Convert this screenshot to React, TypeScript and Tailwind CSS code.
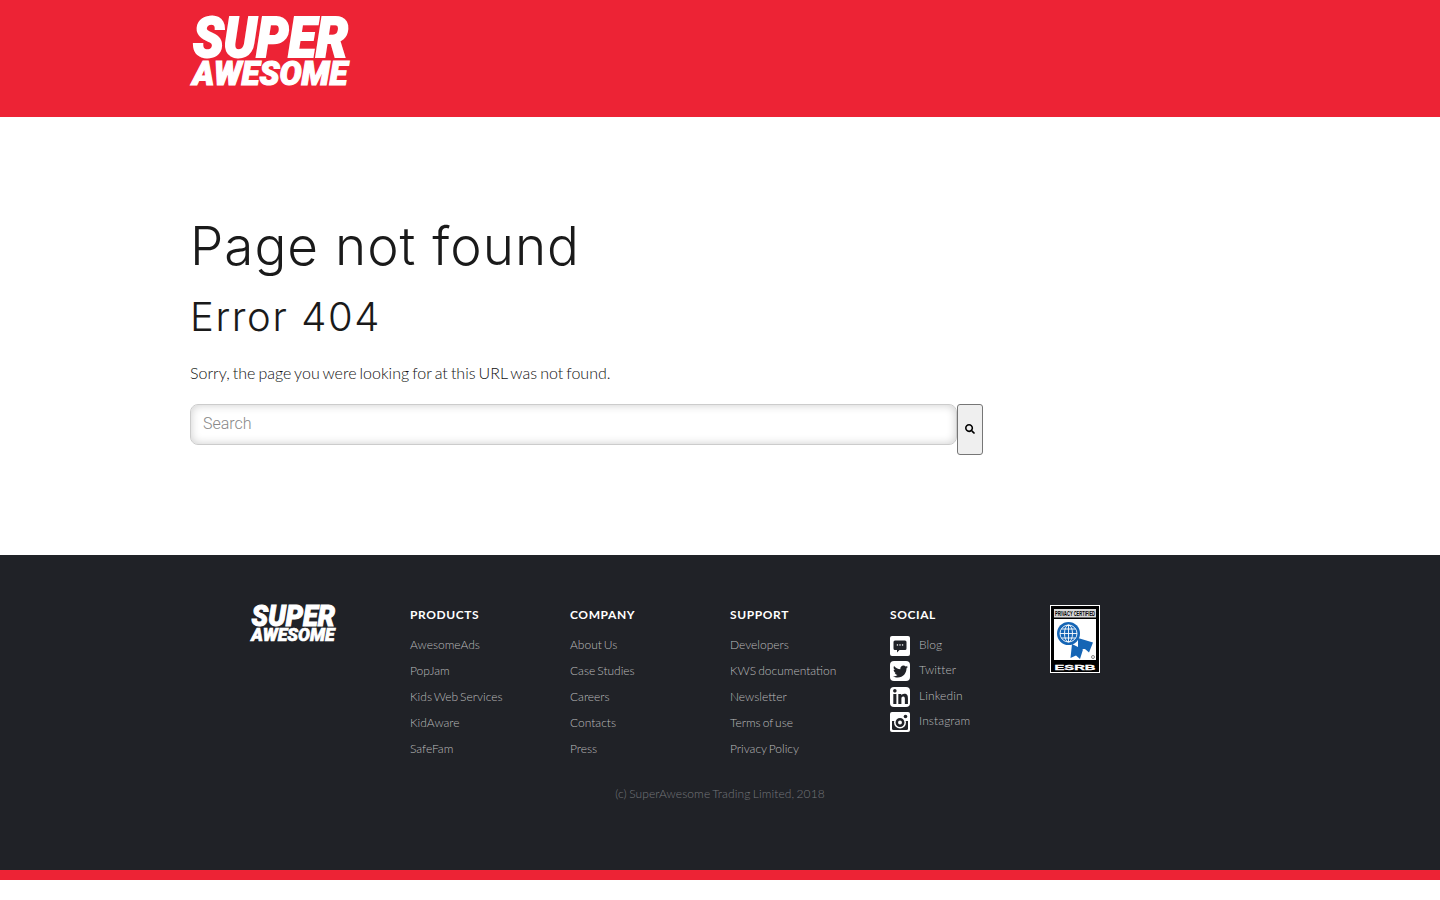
import React from 'react';
import { FaSearch, FaTwitter, FaLinkedinIn } from 'react-icons/fa';

const footerColumns = [
  { title: 'PRODUCTS', links: ['AwesomeAds', 'PopJam', 'Kids Web Services', 'KidAware', 'SafeFam'] },
  { title: 'COMPANY', links: ['About Us', 'Case Studies', 'Careers', 'Contacts', 'Press'] },
  { title: 'SUPPORT', links: ['Developers', 'KWS documentation', 'Newsletter', 'Terms of use', 'Privacy Policy'] },
];

const BlogIcon = () => (
  <svg viewBox="0 0 20 20" className="w-5 h-5">
    <rect width="20" height="20" rx="2" fill="#fff" />
    <path d="M5 4.500h10a1.500 1.500 0 0 1 1.500 1.500v6.500a1.500 1.500 0 0 1-1.500 1.500H9.500L7 16.500V14H5a1.500 1.500 0 0 1-1.500-1.500V6A1.500 1.500 0 0 1 5 4.500z" fill="#202227" />
    <rect x="6.800" y="8.300" width="1.300" height="1.300" fill="#fff" />
    <rect x="9.350" y="8.300" width="1.300" height="1.300" fill="#fff" />
    <rect x="11.900" y="8.300" width="1.300" height="1.300" fill="#fff" />
  </svg>
);

const InstagramIcon = () => (
  <svg viewBox="0 0 20 20" className="w-5 h-5">
    <rect width="20" height="20" rx="2" fill="#fff" />
    <path d="M2 9h16v7.500a1.500 1.500 0 0 1-1.500 1.500h-13A1.500 1.500 0 0 1 2 16.500z" fill="#202227" />
    <circle cx="10" cy="10.500" r="6" fill="#fff" />
    <circle cx="10" cy="10.500" r="3.200" fill="none" stroke="#202227" strokeWidth="2.500" />
    <circle cx="15.500" cy="4.500" r="1.800" fill="#202227" />
  </svg>
);

const SquareIcon = ({ children }: { children: React.ReactNode }) => (
  <span className="w-5 h-5 bg-white rounded-sm flex items-center justify-center text-[#202227]">{children}</span>
);

const socials = [
  { name: 'Blog', icon: <BlogIcon />, gap: 'mb-[5px]' },
  { name: 'Twitter', icon: <SquareIcon><FaTwitter size={15} /></SquareIcon>, gap: 'mb-[6px]' },
  { name: 'Linkedin', icon: <SquareIcon><FaLinkedinIn size={17} /></SquareIcon>, gap: 'mb-[5px]' },
  { name: 'Instagram', icon: <InstagramIcon />, gap: '' },
];

const Logo = ({ className }: { className: string }) => (
  <svg viewBox="0 0 160 70" className={`overflow-visible ${className}`} fill="#fff" stroke="#fff" fontFamily="Roboto, sans-serif" fontWeight={900} fontStyle="italic">
    <text x="3" y="39.500" fontSize="55" strokeWidth="2" textLength="155" lengthAdjust="spacingAndGlyphs">SUPER</text>
    <text x="2.500" y="67.500" fontSize="33" strokeWidth="1.200" textLength="155" lengthAdjust="spacingAndGlyphs">AWESOME</text>
  </svg>
);

const EsrbBadge = () => (
  <svg viewBox="0 0 50 68" className="w-[50px] h-[68px]" fontFamily="'Liberation Sans', sans-serif">
    <rect width="50" height="68" fill="#fff" />
    <rect x="1" y="1" width="48" height="66" fill="#000" />
    <rect x="4" y="4" width="42" height="8.500" fill="#d8d8d8" />
    <text x="5" y="11" fontSize="7" fontWeight={700} fill="#000" textLength="40" lengthAdjust="spacingAndGlyphs">PRIVACY CERTIFIED</text>
    <rect x="4" y="14" width="42" height="41" fill="#fff" />
    <path d="M28 33L43 37.500L39 47.500L35 44L28 44z" fill="#1565b5" />
    <path d="M22 39L33 44.500L30 54L26 50.500L20.500 53z" fill="#1565b5" />
    <circle cx="18.500" cy="28.500" r="11.500" fill="#1565b5" />
    <circle cx="18.500" cy="28.500" r="8.500" fill="none" stroke="#fff" strokeWidth="0.900" />
    <ellipse cx="18.500" cy="28.500" rx="4" ry="8.500" fill="none" stroke="#fff" strokeWidth="0.900" />
    <path d="M10 28.500h17M11.500 24h14M11.500 33h14M18.500 20v17" stroke="#fff" strokeWidth="0.900" />
    <circle cx="43" cy="52" r="1.500" fill="none" stroke="#555" strokeWidth="0.700" />
    <text x="4.500" y="64.500" fontSize="8" fontWeight={700} fill="#fff" stroke="#fff" strokeWidth="0.300" textLength="41" lengthAdjust="spacingAndGlyphs">ESRB</text>
  </svg>
);

export default function App() {
  return (
    <div className="bg-white min-h-[900px] font-['Lato',sans-serif] font-light">
      {/* header */}
      <header className="h-[117px] bg-[#ed2335] pl-[190px] pt-[17px]">
        <Logo className="w-[160px] h-[70px]" />
      </header>

      {/* main */}
      <main className="h-[438px] pl-[190px] pt-[97px] text-[#1a1a1a]">
        <h1 className="text-[53px] leading-[64px] font-light font-['Inter',sans-serif] tracking-[1px]">Page not found</h1>
        <h2 className="text-[40px] leading-[48px] font-light font-['Inter',sans-serif] mt-[15px] tracking-[1.6px]">Error 404</h2>
        <p className="text-[16px] leading-[24px] mt-[20px] text-[#111] [word-spacing:-1.25px]">Sorry, the page you were looking for at this URL was not found.</p>
        <form className="flex items-start mt-[19px]">
          <input
            placeholder="Search"
            className="w-[767px] h-[41px] border border-[#ccc] rounded-lg px-3 pb-[2px] text-[16px] font-['Roboto',sans-serif] font-light shadow-[inset_0_0_10px_rgba(0,0,0,0.2)] placeholder:text-[#888] outline-none"
          />
          <button type="button" className="w-[26px] h-[51px] bg-[#efefef] border border-[#767676] rounded-[3px] flex items-center justify-center text-black pb-[2px]">
            <FaSearch size={10} />
          </button>
        </form>
      </main>

      {/* footer */}
      <footer className="h-[315px] bg-[#202227]">
        <div className="flex pl-[250px] pt-[50px]">
          <div className="w-[160px]">
            <Logo className="w-[86px] h-[38px]" />
          </div>
          {footerColumns.map((col) => (
            <div key={col.title} className="w-[160px]">
              <h5 className="text-[12px] leading-[20px] font-bold tracking-[0.6px] text-white">{col.title}</h5>
              <ul className="mt-[7px]">
                {col.links.map((link) => (
                  <li key={link} className="text-[12px] leading-[26px] text-[#bbbbbc] [word-spacing:-1.3px]">{link}</li>
                ))}
              </ul>
            </div>
          ))}
          <div className="w-[160px]">
            <h5 className="text-[12px] leading-[20px] font-bold tracking-[0.6px] text-white">SOCIAL</h5>
            <ul className="mt-[11px]">
              {socials.map((s) => (
                <li key={s.name} className={`flex items-center h-[20px] gap-[9px] text-[12px] text-[#bbbbbc] tracking-[0.1px] ${s.gap}`}>
                  {s.icon}
                  <span className="pb-[2px]">{s.name}</span>
                </li>
              ))}
            </ul>
          </div>
          <EsrbBadge />
        </div>
        <p className="text-center text-[12px] leading-[18px] mt-[23px] text-[#75777b] tracking-[0.1px] [word-spacing:-1px]">(c) SuperAwesome Trading Limited, 2018</p>
      </footer>
      <div className="h-[10px] bg-[#ed2335]" />
    </div>
  );
}
